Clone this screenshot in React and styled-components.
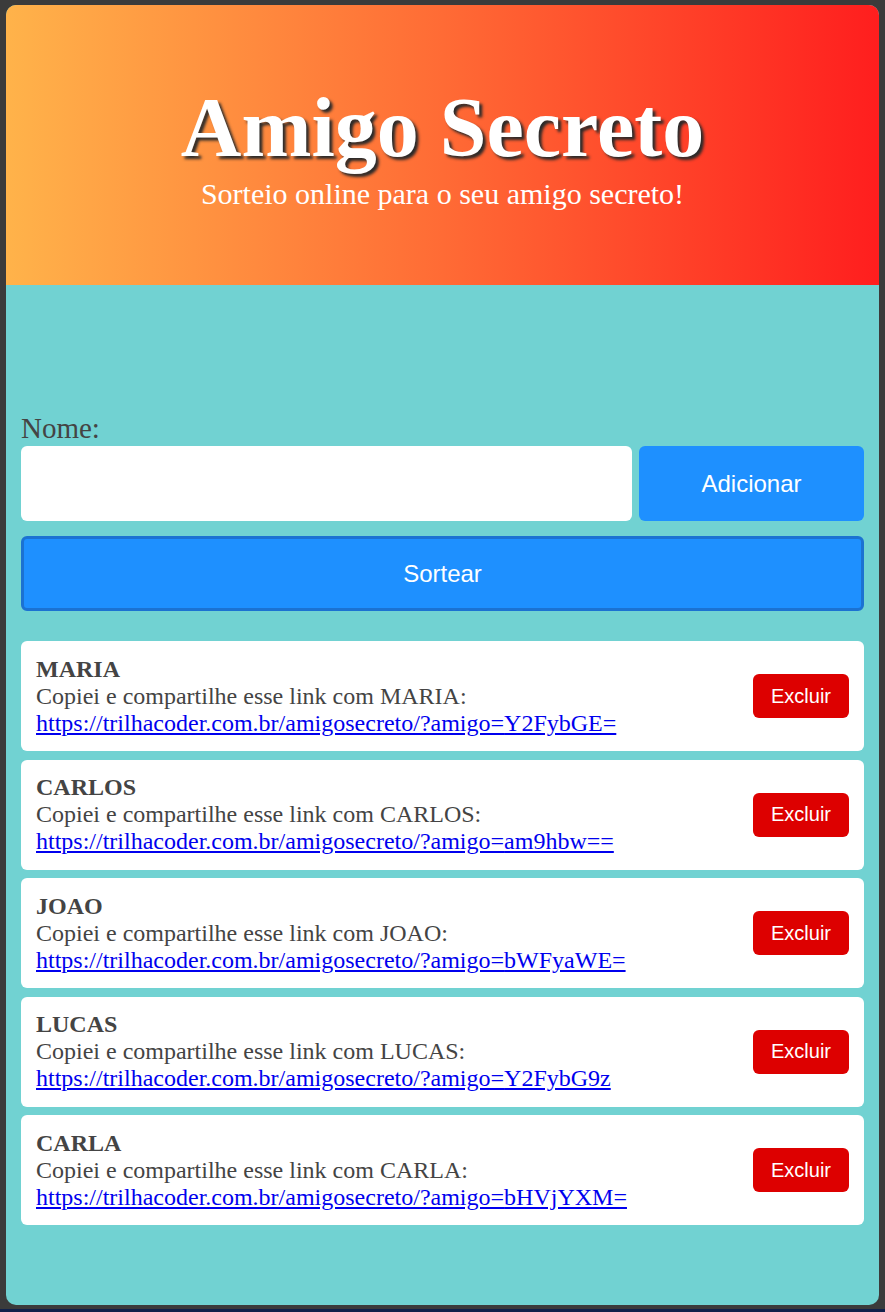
import React from "react";
import styled, { createGlobalStyle } from "styled-components";

const GlobalStyle = createGlobalStyle`
  html, body {
    margin: 0;
    padding: 0;
    background: #3b3b3b;
  }
  * {
    box-sizing: border-box;
  }
`;

const friends = [
  { name: "MARIA", code: "Y2FybGE=" },
  { name: "CARLOS", code: "am9hbw==" },
  { name: "JOAO", code: "bWFyaWE=" },
  { name: "LUCAS", code: "Y2FybG9z" },
  { name: "CARLA", code: "bHVjYXM=" },
];

const App = () => {
  return (
    <>
      <GlobalStyle />
      <Page>
        <Container>
          <Header>
            <Title>Amigo Secreto</Title>
            <Subtitle>Sorteio online para o seu amigo secreto!</Subtitle>
          </Header>
          <Main>
            <Label htmlFor="nome">Nome:</Label>
            <InputRow>
              <NameInput id="nome" type="text" />
              <AddButton>Adicionar</AddButton>
            </InputRow>
            <DrawButton>Sortear</DrawButton>
            <FriendList>
              {friends.map((friend) => (
                <FriendCard key={friend.name}>
                  <FriendInfo>
                    <FriendName>{friend.name}</FriendName>
                    <FriendText>
                      Copiei e compartilhe esse link com {friend.name}:
                    </FriendText>
                    <FriendLink
                      href={`https://trilhacoder.com.br/amigosecreto/?amigo=${friend.code}`}
                    >
                      https://trilhacoder.com.br/amigosecreto/?amigo={friend.code}
                    </FriendLink>
                  </FriendInfo>
                  <DeleteButton>Excluir</DeleteButton>
                </FriendCard>
              ))}
            </FriendList>
          </Main>
        </Container>
      </Page>
    </>
  );
};

const Page = styled.div`
  padding: 5px 6px 0 6px;
  min-height: 1312px;
  border-bottom: 3px solid #10204a;
`;

const Container = styled.div`
  background-color: #71d2d2;
  border-radius: 10px;
  overflow: hidden;
  font-family: "Liberation Serif", "Times New Roman", serif;
`;

const Header = styled.header`
  height: 280px;
  padding-top: 81px;
  background: linear-gradient(to right, #ffb34a, #ff6b35 50%, #ff1e1e);
  display: flex;
  flex-direction: column;
  align-items: center;
  color: #fff;
`;

const Title = styled.h1`
  margin: 0;
  font-size: 84px;
  line-height: 84px;
  font-weight: 700;
  text-shadow: 3px 3px 3px #2a2a2a;
`;

const Subtitle = styled.p`
  margin: 7px 0 0 0;
  font-size: 30px;
  line-height: normal;
`;

const Main = styled.main`
  padding: 127px 15px 80px 15px;
`;

const Label = styled.label`
  display: block;
  font-size: 29px;
  line-height: normal;
  color: #444;
`;

const InputRow = styled.div`
  display: flex;
  gap: 7px;
  margin-top: 1px;
`;

const NameInput = styled.input`
  flex: 1;
  height: 75px;
  border: none;
  border-radius: 6px;
  background: #fff;
  padding: 0 12px;
  font-size: 22px;
  outline: none;
`;

const AddButton = styled.button`
  width: 225px;
  height: 75px;
  border: none;
  border-radius: 6px;
  background-color: #1e90ff;
  color: #fff;
  font-family: "Liberation Sans", Arial, sans-serif;
  font-size: 24px;
  cursor: pointer;
`;

const DrawButton = styled.button`
  display: block;
  width: 100%;
  height: 75px;
  margin-top: 15px;
  border: 3px solid #1b72d2;
  border-radius: 6px;
  background-color: #1e90ff;
  color: #fff;
  font-family: "Liberation Sans", Arial, sans-serif;
  font-size: 24px;
  cursor: pointer;
`;

const FriendList = styled.ul`
  list-style: none;
  margin: 30px 0 0 0;
  padding: 0;
  display: flex;
  flex-direction: column;
  gap: 8.5px;
`;

const FriendCard = styled.li`
  display: flex;
  align-items: center;
  justify-content: space-between;
  background: #fff;
  border-radius: 6px;
  padding: 14.5px 15px;
`;

const FriendInfo = styled.div`
  display: flex;
  flex-direction: column;
  font-size: 24px;
  line-height: 27px;
  color: #444;
`;

const FriendName = styled.strong`
  font-weight: 700;
`;

const FriendText = styled.span``;

const FriendLink = styled.a`
  color: #0000ee;
  text-decoration: underline;
`;

const DeleteButton = styled.button`
  width: 96px;
  height: 44px;
  border: none;
  border-radius: 6px;
  background-color: #dd0000;
  color: #fff;
  font-family: "Liberation Sans", Arial, sans-serif;
  font-size: 20px;
  cursor: pointer;
`;

export default App;
